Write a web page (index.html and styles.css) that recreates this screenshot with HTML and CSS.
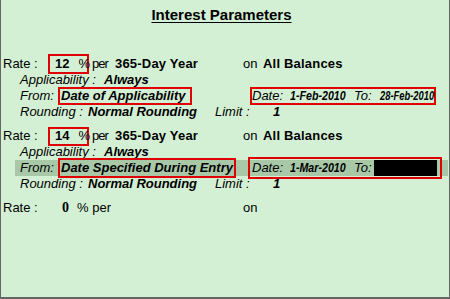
FILE: index.html
```html
<!DOCTYPE html>
<html>
<head>
<meta charset="utf-8">
<link rel="stylesheet" href="styles.css">
</head>
<body>
<div class="screen">
  <div class="title"><span>Interest Parameters</span></div>

  <div class="block">
    <div class="row rate">
      <span class="lbl">Rate :</span>
      <span class="rbox"><b>12</b><b class="pct">%</b></span>
      <span class="per">per</span>
      <b class="year">365-Day Year</b>
      <span class="on">on</span>
      <b class="bal">All Balances</b>
    </div>
    <div class="row sub"><i class="w-app">Applicability :</i><b class="bi">Always</b></div>
    <div class="row sub">
      <i class="w-from">From:</i>
      <span class="fbox fbox1"><b class="bi">Date of Applicability</b></span>
      <span class="dbox dbox1"><i class="w-date">Date:</i><span class="w-d1"><b class="dt">1-Feb-2010</b></span><i class="w-to">To:</i><span class="w-d2"><b class="dt dt2">28-Feb-2010</b></span></span>
    </div>
    <div class="row sub"><i class="w-rnd">Rounding :</i><b class="bi w-nr">Normal Rounding</b><i class="w-lim">Limit :</i><b class="bi">1</b></div>
  </div>

  <div class="block">
    <div class="row rate">
      <span class="lbl">Rate :</span>
      <span class="rbox rbox2"><b>14</b><b class="pct">%</b></span>
      <span class="per">per</span>
      <b class="year">365-Day Year</b>
      <span class="on">on</span>
      <b class="bal">All Balances</b>
    </div>
    <div class="row sub"><i class="w-app">Applicability :</i><b class="bi">Always</b></div>
    <div class="row sub hl">
      <i class="w-from">From:</i>
      <span class="fbox fbox2"><b class="bi">Date Specified During Entry</b></span>
      <span class="dbox dbox2"><i class="w-date">Date:</i><span class="w-d1"><b class="dt">1-Mar-2010</b></span><i class="w-to2">To:</i><span class="blank"></span></span>
    </div>
    <div class="row sub"><i class="w-rnd">Rounding :</i><b class="bi w-nr">Normal Rounding</b><i class="w-lim">Limit :</i><b class="bi">1</b></div>
  </div>

  <div class="block">
    <div class="row rate">
      <span class="lbl">Rate :</span>
      <b class="zero">0</b>
      <span class="pctper">% per</span>
      <span class="on">on</span>
    </div>
  </div>
</div>
</body>
</html>
```

FILE: styles.css
```css
html, body {
  margin: 0;
  padding: 0;
}
body {
  font-family: "Liberation Sans", Arial, sans-serif;
  font-size: 13px;
  color: #000;
  background: #d4f0d4;
}
.screen {
  box-sizing: border-box;
  width: 450px;
  height: 299px;
  background: #d4f0d4;
  border-left: 1px solid #666;
  border-right: 1px solid #666;
  border-bottom: 2px solid #666;
  padding-top: 7px;
  overflow: hidden;
}
.title {
  height: 16px;
  line-height: 16px;
  text-align: center;
  margin-right: 7px;
  margin-bottom: 33px;
}
.title span {
  font-weight: bold;
  font-size: 15px;
  text-decoration: underline;
  text-underline-offset: 2px;
  text-decoration-thickness: 1px;
}
.block {
  margin-bottom: 8px;
}
.row {
  display: flex;
  align-items: center;
  height: 16px;
  line-height: 16px;
  white-space: nowrap;
}
.row * {
  flex: none;
}
.rate {
  padding-left: 2px;
}
.sub {
  padding-left: 19px;
}
.lbl { width: 45px; }
.rbox {
  box-sizing: border-box;
  width: 41px;
  height: 20px;
  border: 2px solid #e00000;
  padding-left: 5px;
  display: flex;
  align-items: center;
}
.rbox2 { height: 19px; }
.pct { margin-left: 9px; font-weight: normal; }
.per {
  margin-left: 3px;
  width: 23px;
  letter-spacing: -1px;
}
.year { width: 128px; letter-spacing: 0.2px; }
.on { width: 20px; }
.bal { letter-spacing: 0.2px; }
.bi {
  font-weight: bold;
  font-style: italic;
}
.w-app { width: 84px; }
.w-from { width: 38px; }
.w-rnd { width: 68px; }
.w-nr { width: 127px; }
.w-lim { width: 58px; }
.fbox {
  box-sizing: border-box;
  height: 18px;
  border: 2px solid #e00000;
  padding-left: 1px;
  display: flex;
  align-items: center;
}
.fbox1 { width: 134px; }
.fbox2 { width: 178px; height: 20px; }
.dbox {
  box-sizing: border-box;
  border: 2px solid #e00000;
  display: flex;
  align-items: center;
}
.dbox1 {
  margin-left: 58px;
  width: 186px;
  height: 18px;
}
.dbox2 {
  margin-left: 12px;
  width: 194px;
  height: 22px;
  padding-left: 2px;
}
.w-date { width: 38px; }
.dt {
  display: inline-block;
  font-weight: bold;
  font-style: italic;
  transform: scaleX(0.82);
  transform-origin: left center;
}
.dt2 { transform: scaleX(0.72); }
.w-d1 { width: 64px; }
.w-d2 { width: 54px; }
.w-to { width: 26px; }
.w-to2 { width: 20px; }
.blank {
  width: 63px;
  height: 16px;
  background: #000;
}
.hl {
  margin-left: 14px;
  margin-right: 1px;
  padding-left: 5px;
  background: #a8c8a8;
}
.zero {
  font-family: "Liberation Serif", "Times New Roman", serif;
  font-size: 14px;
  padding-left: 14px;
  width: 15px;
}
.pctper { width: 166px; }
```
